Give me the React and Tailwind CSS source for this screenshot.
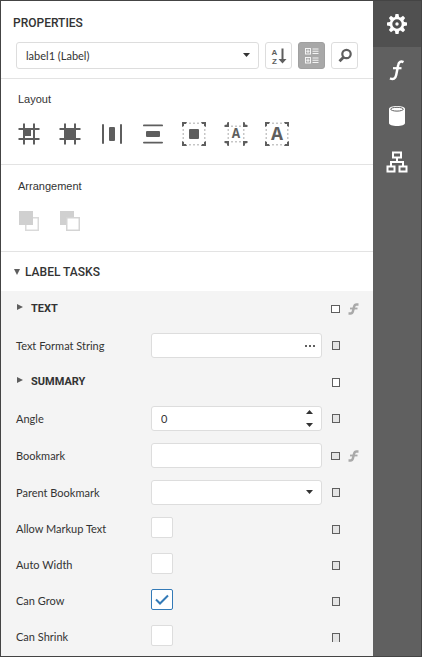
import { useState } from "react";

const SANS = "font-['Liberation_Sans',sans-serif]";
const HEAD = "font-[Roboto,sans-serif]";
const ICON = "h-6 w-6";

function Caret({ up = false, className = "" }) {
  return (
    <svg viewBox="0 0 7 4" className={`h-1 w-[7px] fill-[#333333] ${className}`} aria-hidden="true">
      <path d={up ? "M0 4L3.500 0L7 4Z" : "M0 0H7L3.500 4Z"} />
    </svg>
  );
}

/* ---------- layout icons ---------- */

const HASH = "M6 1.500h2v21h-2zM16 1.500h2v21h-2zM1.500 6h21v2h-21zM1.500 16h21v2h-21z";

function AlignToGrid() {
  return (
    <svg viewBox="0 0 24 24" className={ICON} fill="#5e5e5e" aria-hidden="true">
      <path d={HASH} />
      <rect x="7" y="7" width="7" height="7" />
    </svg>
  );
}

function SizeToGrid() {
  return (
    <svg viewBox="0 0 24 24" className={ICON} fill="#5e5e5e" aria-hidden="true">
      <path d={HASH} />
      <rect x="6" y="6" width="12" height="12" rx="1" />
    </svg>
  );
}

function CenterHorizontally() {
  return (
    <svg viewBox="0 0 24 24" className={ICON} fill="#5e5e5e" aria-hidden="true">
      <rect x="2" y="2" width="2" height="20" rx="1" />
      <rect x="20" y="2" width="2" height="20" rx="1" />
      <rect x="9" y="5" width="6" height="14" rx="1" />
    </svg>
  );
}

function CenterVertically() {
  return (
    <svg viewBox="0 0 24 24" className={ICON} fill="#5e5e5e" aria-hidden="true">
      <rect x="2" y="2.500" width="20" height="1.800" rx="0.900" />
      <rect x="2" y="19.700" width="20" height="1.800" rx="0.900" />
      <rect x="5" y="9" width="14" height="6" rx="1" />
    </svg>
  );
}

const FRAME = "M0 0h5l-1 2h-2v2l-2 1zM24 0v5l-2-1v-2h-2l-1-2zM0 24v-5l2 1v2h2l1 2zM24 24h-5l1-2h2v-2l2-1z";

function Dots({ lo, hi, at }) {
  return (
    <g fill="#b4b4b4">
      {at.map((p) => (
        <g key={p}>
          <rect x={p} y={lo} width="1.500" height="1.500" />
          <rect x={p} y={hi} width="1.500" height="1.500" />
          <rect x={lo} y={p} width="1.500" height="1.500" />
          <rect x={hi} y={p} width="1.500" height="1.500" />
        </g>
      ))}
    </g>
  );
}

function FitBounds() {
  return (
    <svg viewBox="0 0 24 24" className={ICON} fill="#5e5e5e" aria-hidden="true">
      <path d={FRAME} />
      <Dots lo={0.5} hi={22} at={[7.25, 11.25, 15.25]} />
      <rect x="7" y="7" width="10" height="10" rx="1" />
    </svg>
  );
}

function FitTextToBounds() {
  return (
    <svg viewBox="0 0 24 24" className={ICON} fill="#5e5e5e" aria-hidden="true">
      <path d="M.500 3l2.500-.500v-2l2-.500v5h-4.500zM23.500 3l-2.500-.500v-2l-2-.500v5h4.500zM.500 21l2.500.500v2l2 .500v-5h-4.500zM23.500 21l-2.500.500v2l-2 .500v-5h4.500z" />
      <Dots lo={3.5} hi={19} at={[7.25, 11.25, 15.25]} />
      <text x="12" y="16" textAnchor="middle" className="font-['Liberation_Mono',monospace] text-[14px] font-bold">A</text>
    </svg>
  );
}

function FitBoundsToText() {
  return (
    <svg viewBox="0 0 24 24" className={ICON} fill="#5e5e5e" aria-hidden="true">
      <path d={FRAME} />
      <Dots lo={0.5} hi={22} at={[7.25, 11.25, 15.25]} />
      <text x="12" y="18" textAnchor="middle" className="font-['Liberation_Mono',monospace] text-[20px] font-bold">A</text>
    </svg>
  );
}

const LAYOUT_ACTIONS = [
  ["Align to grid", AlignToGrid],
  ["Size to grid", SizeToGrid],
  ["Center horizontally", CenterHorizontally],
  ["Center vertically", CenterVertically],
  ["Fit bounds to container", FitBounds],
  ["Fit text to bounds", FitTextToBounds],
  ["Fit bounds to text", FitBoundsToText],
];

function BringToFront() {
  return (
    <svg viewBox="0 0 24 24" className={ICON} aria-hidden="true">
      <rect x="8.750" y="8.750" width="12.500" height="12.500" fill="none" stroke="#dadada" strokeWidth="1.500" />
      <rect x="2" y="2" width="14" height="14" fill="#d0d0d0" />
    </svg>
  );
}

function SendToBack() {
  return (
    <svg viewBox="0 0 24 24" className={ICON} aria-hidden="true">
      <rect x="2" y="2" width="14" height="14" fill="#d0d0d0" />
      <rect x="8.750" y="8.750" width="12.500" height="12.500" fill="#ffffff" stroke="#d4d4d4" strokeWidth="1.500" />
    </svg>
  );
}

/* ---------- toolbar icons ---------- */

function SortIcon() {
  return (
    <svg viewBox="0 0 18 18" className="h-[18px] w-[18px]" fill="#5e5e5e" aria-hidden="true">
      <g className="font-['Liberation_Sans',sans-serif] text-[8px] font-bold">
        <text x="4.500" y="7.500" textAnchor="middle">A</text>
        <text x="4.500" y="17" textAnchor="middle">Z</text>
      </g>
      <path d="M11.500 1.500h2v10.500h3l-4 4.500l-4-4.500h3z" />
    </svg>
  );
}

function CategoryIcon() {
  return (
    <svg viewBox="0 0 16 16" className="h-4 w-4" fill="#f4f4f4" aria-hidden="true">
      {[0, 9].map((y) => (
        <g key={y} transform={`translate(1 ${y})`}>
          <path fillRule="evenodd" d="M0 0h6v6.500h-6zM1 1v4.500h4v-4.500z" />
          <path d="M2.500 1.500h1v3.500h-1zM1.300 2.700h3.400v1h-3.400z" />
          <path d="M7.500 .500h6v1h-6zM7.500 2.700h6v1h-6zM7.500 5h6v1h-6z" />
        </g>
      ))}
    </svg>
  );
}

function SearchIcon() {
  return (
    <svg viewBox="0 0 16 16" className="h-4 w-4" fill="none" stroke="#5e5e5e" aria-hidden="true">
      <circle cx="9.500" cy="6" r="4.200" strokeWidth="2.200" />
      <path d="M6.500 9.300L2.500 13.300" strokeWidth="2.800" />
    </svg>
  );
}

/* ---------- sidebar icons ---------- */

function GearIcon() {
  return (
    <svg viewBox="-12 -12 24 24" className={ICON} fill="#ffffff" aria-hidden="true">
      {[0, 45, 90, 135, 180, 225, 270, 315].map((a) => (
        <path key={a} d="M-2.200 -6L-1.500 -10H1.500L2.200 -6Z" transform={`rotate(${a})`} />
      ))}
      <circle r="6" fill="#505050" stroke="#ffffff" strokeWidth="2.600" />
      <circle r="1.700" />
    </svg>
  );
}

function FunctionIcon() {
  return (
    <svg viewBox="0 0 24 24" className={ICON} fill="none" stroke="#ffffff" strokeWidth="2.500" aria-hidden="true">
      <path d="M18.500 4.200C16 2.800 13.800 3.600 13.200 7L11.200 17C10.500 20.800 8.200 21.700 5 20.300" />
      <path d="M8 10.200H16.500" strokeWidth="2.200" />
    </svg>
  );
}

function DatabaseIcon() {
  return (
    <svg viewBox="0 0 24 24" className={ICON} aria-hidden="true">
      <path d="M4 5C4 3 7.500 2 12 2S20 3 20 5V19C20 21 16.500 22 12 22S4 21 4 19Z" fill="#ffffff" />
      <ellipse cx="12" cy="5.200" rx="6.300" ry="1.900" fill="#ffffff" stroke="#606060" strokeWidth="1" />
    </svg>
  );
}

function TreeIcon() {
  return (
    <svg viewBox="0 0 24 24" className={ICON} fill="none" stroke="#ffffff" strokeWidth="2" aria-hidden="true">
      <rect x="8" y="2.500" width="8" height="5" />
      <rect x="2.500" y="16.500" width="7" height="5" />
      <rect x="14.500" y="16.500" width="7" height="5" />
      <path d="M12 7.500V12M6 16.500V12H18V16.500" />
    </svg>
  );
}

const TABS = [
  ["Properties", GearIcon],
  ["Expressions", FunctionIcon],
  ["Fields", DatabaseIcon],
  ["Report explorer", TreeIcon],
];

/* ---------- property rows ---------- */

function ExpressionIcon() {
  return (
    <svg viewBox="0 0 11 12" className="h-3 w-[11px]" fill="none" stroke="#a9a9a9" aria-hidden="true">
      <path d="M10.500 1.500H8.500C7 1.500 6.500 2 6.100 3.600L4.900 8.400C4.500 10 4 10.500 2.500 10.500H.500" strokeWidth="2.400" />
      <path d="M2 5.500H9.500" strokeWidth="1.800" />
    </svg>
  );
}

function Marker({ label, wide = false, filled = true, expression = false, cut = false }) {
  return (
    <div className="flex w-[42px] items-center gap-2">
      <button
        type="button"
        aria-label={`${label} options`}
        className={`border border-[#5e5e5e] ${wide ? "h-2 w-[9px]" : "ml-px h-[9px] w-2"} ${filled ? "bg-[#e4e4e4]" : "bg-white"} ${cut ? "border-b-0" : ""}`}
      />
      {expression && (
        <button type="button" aria-label={`${label} expression`}>
          <ExpressionIcon />
        </button>
      )}
    </div>
  );
}

function GroupRow({ label, wide, expression }) {
  return (
    <div className="flex h-9 items-center justify-between">
      <button type="button" className={`flex items-center gap-2 pl-4 text-[11px] font-bold text-[#333333] ${HEAD}`}>
        <svg viewBox="0 0 6 6" className="mb-1 h-[6px] w-[6px] fill-[#5e5e5e]" aria-hidden="true">
          <path d="M0 0L6 3L0 6Z" />
        </svg>
        {label}
      </button>
      <Marker label={label} filled={false} wide={wide} expression={expression} />
    </div>
  );
}

const FIELD = "h-[25px] w-full appearance-none rounded-[3px] border border-[#dddddd] bg-white px-[9px] text-[11px] text-[#333333] outline-none";

function FieldRow({ id, label, wide, expression, children }) {
  return (
    <div className="flex h-[37px] items-center">
      <label htmlFor={id} className="w-[150px] shrink-0 pl-[15px]">{label}</label>
      <div className="relative mr-[9px] min-w-0 flex-1">{children}</div>
      <Marker label={label} wide={wide} expression={expression} />
    </div>
  );
}

function CheckRow({ id, label, initial = false, cut }) {
  const [checked, setChecked] = useState(initial);
  return (
    <div className="flex h-9 items-center">
      <label htmlFor={id} className="w-[150px] shrink-0 pl-[15px]">{label}</label>
      <div className="relative mb-1 flex">
        <input
          id={id}
          type="checkbox"
          checked={checked}
          onChange={(e) => setChecked(e.target.checked)}
          className="h-[21px] w-[22px] appearance-none rounded-[2px] border border-[#dddddd] bg-white checked:border-[#337ab7]"
        />
        {checked && (
          <svg viewBox="0 0 22 21" className="pointer-events-none absolute inset-0 h-full w-full" fill="none" stroke="#337ab7" strokeWidth="2" aria-hidden="true">
            <path d="M5 10.500L9 14.500L17 6.500" />
          </svg>
        )}
      </div>
      <div className="flex-1" />
      <Marker label={label} cut={cut} />
    </div>
  );
}

const TOOL = "flex h-[27px] w-[27px] shrink-0 items-center justify-center rounded-[3px] border";

export default function App() {
  const [tab, setTab] = useState("Properties");
  const [format, setFormat] = useState("");
  const [angle, setAngle] = useState(0);
  const [bookmark, setBookmark] = useState("");

  return (
    <div className="flex min-h-screen border border-[#444444] bg-white font-[Lato,sans-serif] text-[11px] leading-4 text-[#333333]">
      <main className="flex min-w-0 flex-1 flex-col">
        <header className="border-b border-[#e3e3e3] pt-[14px] pr-[15px] pb-[9px] pl-3">
          <h1 className={`text-xs font-medium ${HEAD}`}>PROPERTIES</h1>
          <div className="mt-[11px] flex gap-[6px] pl-[3px]">
            <div className="relative min-w-0 flex-1">
              <select
                aria-label="Element"
                className="h-[27px] w-full appearance-none rounded-[3px] border border-[#dddddd] bg-white px-[9px] text-[11px] outline-none"
              >
                <option>label1 (Label)</option>
              </select>
              <Caret className="pointer-events-none absolute top-[11px] right-[9px]" />
            </div>
            <button type="button" aria-label="Sort" className={`${TOOL} border-[#dddddd] bg-white`}><SortIcon /></button>
            <button type="button" aria-label="Categorize" className={`${TOOL} border-[#a0a0a0] bg-[#a8a8a8]`}><CategoryIcon /></button>
            <button type="button" aria-label="Search" className={`${TOOL} border-[#dddddd] bg-white`}><SearchIcon /></button>
          </div>
        </header>

        <section className="border-b border-[#e3e3e3] pt-3 pb-[18px]">
          <h2 className={`pl-[17px] text-[11px] ${SANS}`}>Layout</h2>
          <div className="mt-[15px] ml-[7px] grid max-w-[290px] grid-cols-7 justify-items-center">
            {LAYOUT_ACTIONS.map(([name, Icon]) => (
              <button key={name} type="button" aria-label={name}><Icon /></button>
            ))}
          </div>
        </section>

        <section className="border-b border-[#e3e3e3] pt-[13px] pb-[18px]">
          <h2 className={`pl-[17px] text-[11px] ${SANS}`}>Arrangement</h2>
          <div className="mt-[15px] ml-[7px] grid max-w-[290px] grid-cols-7 justify-items-center">
            <button type="button" aria-label="Bring to front" disabled><BringToFront /></button>
            <button type="button" aria-label="Send to back" disabled><SendToBack /></button>
          </div>
        </section>

        <h2 className="flex h-[39px] items-center">
          <button type="button" className={`flex items-center gap-[5px] pl-[13px] text-xs font-medium ${HEAD}`}>
            <svg viewBox="0 0 6 6" className="h-[6px] w-[6px] fill-[#5e5e5e]" aria-hidden="true">
              <path d="M0 0H6L3 6Z" />
            </svg>
            LABEL TASKS
          </button>
        </h2>

        <form className="flex-1 bg-[#f4f4f4]" onSubmit={(e) => e.preventDefault()}>
          <GroupRow label="TEXT" wide expression />
          <FieldRow id="format" label="Text Format String">
            <input id="format" type="text" value={format} onChange={(e) => setFormat(e.target.value)} className={FIELD} />
            <button type="button" aria-label="Edit format" className="absolute top-0 right-0 flex h-full w-[25px] items-center justify-center">
              <svg viewBox="0 0 10 2" className="h-[2px] w-[10px] fill-[#5e5e5e]" aria-hidden="true">
                <path d="M0 0h2v2h-2zM4 0h2v2h-2zM8 0h2v2h-2z" />
              </svg>
            </button>
          </FieldRow>
          <GroupRow label="SUMMARY" />
          <FieldRow id="angle" label="Angle">
            <input id="angle" type="text" inputMode="numeric" value={angle} onChange={(e) => setAngle(Number(e.target.value) || 0)} className={FIELD} />
            <div className="absolute inset-y-0 right-0 flex w-[25px] flex-col">
              <button type="button" aria-label="Increase angle" onClick={() => setAngle(angle + 1)} className="flex flex-1 items-center justify-center"><Caret up /></button>
              <button type="button" aria-label="Decrease angle" onClick={() => setAngle(angle - 1)} className="flex flex-1 items-center justify-center"><Caret /></button>
            </div>
          </FieldRow>
          <FieldRow id="bookmark" label="Bookmark" wide expression>
            <input id="bookmark" type="text" value={bookmark} onChange={(e) => setBookmark(e.target.value)} className={FIELD} />
          </FieldRow>
          <FieldRow id="parent" label="Parent Bookmark">
            <select id="parent" className={FIELD}>
              <option />
            </select>
            <Caret className="pointer-events-none absolute top-[10px] right-[9px]" />
          </FieldRow>
          <CheckRow id="markup" label="Allow Markup Text" />
          <CheckRow id="auto" label="Auto Width" />
          <CheckRow id="grow" label="Can Grow" initial />
          <CheckRow id="shrink" label="Can Shrink" cut />
        </form>
      </main>

      <nav aria-label="Panels" className="flex w-12 shrink-0 flex-col bg-[#606060]">
        {TABS.map(([name, Icon]) => (
          <button
            key={name}
            type="button"
            aria-label={name}
            onClick={() => setTab(name)}
            className={`flex h-[46px] items-center justify-center ${tab === name ? "bg-[#505050]" : ""}`}
          >
            <Icon />
          </button>
        ))}
      </nav>
    </div>
  );
}
